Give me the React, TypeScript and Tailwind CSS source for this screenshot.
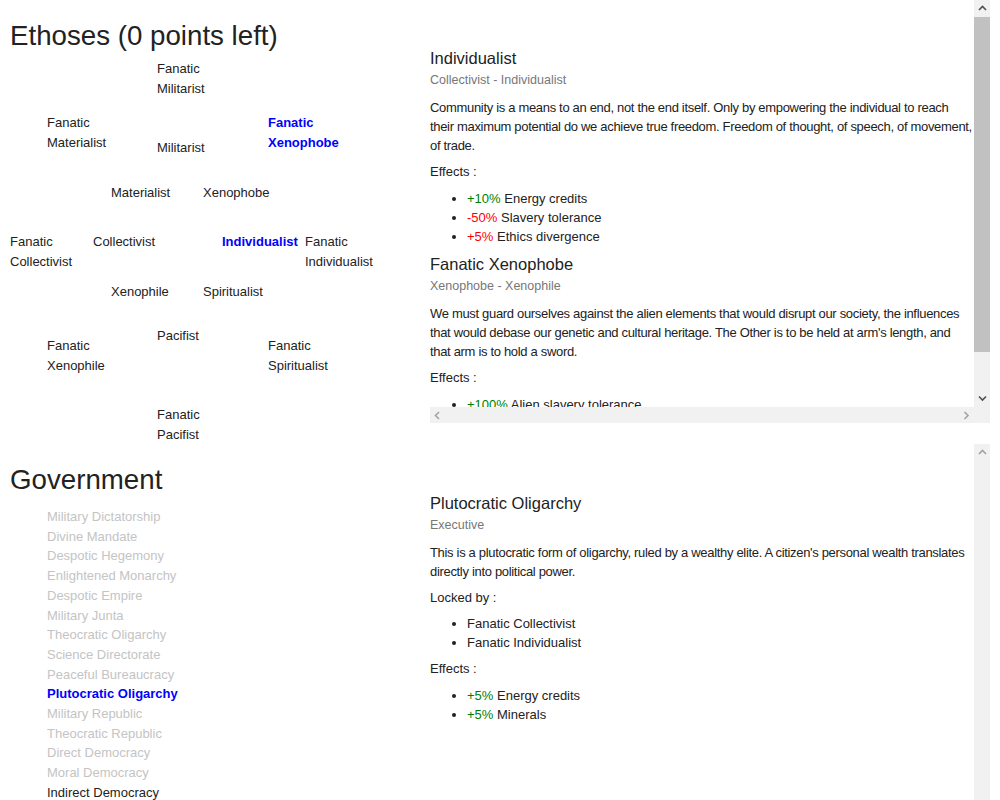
import React from "react";

type Node = { lines: string[]; x: number; y: number; active?: boolean };

const nodes: Node[] = [
  { lines: ["Fanatic", "Militarist"], x: 147, y: 8 },
  { lines: ["Fanatic", "Materialist"], x: 37, y: 62 },
  { lines: ["Militarist"], x: 147, y: 87 },
  { lines: ["Fanatic", "Xenophobe"], x: 258, y: 62, active: true },
  { lines: ["Materialist"], x: 101, y: 132 },
  { lines: ["Xenophobe"], x: 193, y: 132 },
  { lines: ["Fanatic", "Collectivist"], x: 0, y: 181 },
  { lines: ["Collectivist"], x: 83, y: 181 },
  { lines: ["Individualist"], x: 212, y: 181, active: true },
  { lines: ["Fanatic", "Individualist"], x: 295, y: 181 },
  { lines: ["Xenophile"], x: 101, y: 231 },
  { lines: ["Spiritualist"], x: 193, y: 231 },
  { lines: ["Fanatic", "Xenophile"], x: 37, y: 285 },
  { lines: ["Pacifist"], x: 147, y: 275 },
  { lines: ["Fanatic", "Spiritualist"], x: 258, y: 285 },
  { lines: ["Fanatic", "Pacifist"], x: 147, y: 354 },
];

const governments: { name: string; state: "off" | "active" | "on" }[] = [
  { name: "Military Dictatorship", state: "off" },
  { name: "Divine Mandate", state: "off" },
  { name: "Despotic Hegemony", state: "off" },
  { name: "Enlightened Monarchy", state: "off" },
  { name: "Despotic Empire", state: "off" },
  { name: "Military Junta", state: "off" },
  { name: "Theocratic Oligarchy", state: "off" },
  { name: "Science Directorate", state: "off" },
  { name: "Peaceful Bureaucracy", state: "off" },
  { name: "Plutocratic Oligarchy", state: "active" },
  { name: "Military Republic", state: "off" },
  { name: "Theocratic Republic", state: "off" },
  { name: "Direct Democracy", state: "off" },
  { name: "Moral Democracy", state: "off" },
  { name: "Indirect Democracy", state: "on" },
];

function Chevron({ dir, color }: { dir: "up" | "down" | "left" | "right"; color: string }) {
  const pts: Record<string, string> = {
    up: "1,5 4.5,1.5 8,5",
    down: "1,1.5 4.5,5 8,1.5",
    left: "5,1 1.5,4.5 5,8",
    right: "1.5,1 5,4.5 1.5,8",
  };
  const vertical = dir === "up" || dir === "down";
  return (
    <svg width={vertical ? 9 : 7} height={vertical ? 7 : 9} viewBox={vertical ? "0 0 9 7" : "0 0 7 9"}>
      <polyline points={pts[dir]} fill="none" stroke={color} strokeWidth="1.6" />
    </svg>
  );
}

type Effect = { value: string; positive: boolean; label: string };

function Entry({
  title,
  subtitle,
  text,
  locked,
  effects,
  first,
}: {
  title: string;
  subtitle: string;
  text: string;
  locked?: string[];
  effects: Effect[];
  first?: boolean;
}) {
  return (
    <div className={first ? "" : "mt-[8.5px]"}>
      <div className="text-[16.5px] leading-[20px] text-[#222]">{title}</div>
      <div className="mt-[1.5px] text-[12.5px] leading-[20px] text-[#777]">{subtitle}</div>
      <p className="mt-[8px] text-[13px] leading-[19px] tracking-[-0.32px] text-[#222]">{text}</p>
      {locked && (
        <>
          <div className="mt-[7px] text-[13px] leading-[20px] text-[#222]">Locked by :</div>
          <ul className="mt-[6.5px] list-disc pl-[37px] text-[13px] leading-[19px] text-[#222]">
            {locked.map((l) => (
              <li key={l}>{l}</li>
            ))}
          </ul>
        </>
      )}
      <div className="mt-[7px] text-[13px] leading-[20px] text-[#222]">Effects :</div>
      <ul className="mt-[7px] list-disc pl-[37px] text-[13px] leading-[19px] text-[#222]">
        {effects.map((e) => (
          <li key={e.label}>
            <span className={e.positive ? "text-[#008000]" : "text-[#ff0000]"}>{e.value}</span> {e.label}
          </li>
        ))}
      </ul>
    </div>
  );
}

export default function App() {
  return (
    <div
      className="h-[800px] w-[1000px] overflow-hidden bg-white text-[#222]"
      style={{ fontFamily: '"Liberation Sans", Arial, sans-serif' }}
    >
      {/* Ethoses section */}
      <div className="flex">
        <div className="w-[430px] pl-[10px] pt-[20px]">
          <h1 className="text-[27.7px] leading-[31px] font-normal text-[#222]">Ethoses (0 points left)</h1>
          <div className="relative h-[393px]">
            {nodes.map((n, i) => (
              <div
                key={i}
                className={
                  "absolute text-[13px] leading-[20px] " +
                  (n.active ? "font-bold text-[#0000ff]" : "text-[#222]")
                }
                style={{ left: n.x, top: n.y }}
              >
                {n.lines.map((l) => (
                  <div key={l}>{l}</div>
                ))}
              </div>
            ))}
          </div>
        </div>

        <div className="flex h-[423px] w-[560px] flex-col">
          <div className="flex min-h-0 flex-1">
            <div className="min-w-0 flex-1 overflow-hidden pt-[48px]">
              <Entry
                first
                title="Individualist"
                subtitle="Collectivist - Individualist"
                text="Community is a means to an end, not the end itself. Only by empowering the individual to reach their maximum potential do we achieve true freedom. Freedom of thought, of speech, of movement, of trade."
                effects={[
                  { value: "+10%", positive: true, label: "Energy credits" },
                  { value: "-50%", positive: false, label: "Slavery tolerance" },
                  { value: "+5%", positive: false, label: "Ethics divergence" },
                ]}
              />
              <Entry
                title="Fanatic Xenophobe"
                subtitle="Xenophobe - Xenophile"
                text="We must guard ourselves against the alien elements that would disrupt our society, the influences that would debase our genetic and cultural heritage. The Other is to be held at arm's length, and that arm is to hold a sword."
                effects={[{ value: "+100%", positive: true, label: "Alien slavery tolerance" }]}
              />
            </div>
            <div className="flex w-[16px] flex-col bg-[#f1f1f1]">
              <div className="flex h-[17px] items-center justify-center">
                <Chevron dir="up" color="#505050" />
              </div>
              <div className="h-[335px] bg-[#c1c1c1]" />
              <div className="flex-1" />
              <div className="flex h-[17px] items-center justify-center">
                <Chevron dir="down" color="#505050" />
              </div>
            </div>
          </div>
          <div className="flex h-[16px]">
            <div className="flex flex-1 items-center justify-between bg-[#f1f1f1] px-[4px]">
              <Chevron dir="left" color="#a3a3a3" />
              <Chevron dir="right" color="#a3a3a3" />
            </div>
            <div className="w-[16px] bg-[#f1f1f1]" />
          </div>
        </div>
      </div>

      {/* Government section */}
      <div className="flex">
        <div className="w-[430px] pl-[10px] pt-[20px]">
          <h1 className="text-[27.7px] leading-[31px] font-normal text-[#222]">Government</h1>
          <ul className="mt-[12px] pl-[37px] text-[13px] leading-[19.7px]">
            {governments.map((g) => (
              <li
                key={g.name}
                className={
                  g.state === "active"
                    ? "font-bold text-[#0000ff]"
                    : g.state === "on"
                    ? "text-[#222]"
                    : "text-[#c4c4c4]"
                }
              >
                {g.name}
              </li>
            ))}
          </ul>
        </div>

        <div className="flex h-[380px] w-[560px]">
          <div className="min-w-0 flex-1 overflow-hidden pt-[49px]">
            <Entry
              first
              title="Plutocratic Oligarchy"
              subtitle="Executive"
              text="This is a plutocratic form of oligarchy, ruled by a wealthy elite. A citizen's personal wealth translates directly into political power."
              locked={["Fanatic Collectivist", "Fanatic Individualist"]}
              effects={[
                { value: "+5%", positive: true, label: "Energy credits" },
                { value: "+5%", positive: true, label: "Minerals" },
              ]}
            />
          </div>
          <div className="flex w-[16px] flex-col bg-[#f1f1f1]">
            <div className="flex h-[17px] items-center justify-center">
              <Chevron dir="up" color="#a3a3a3" />
            </div>
          </div>
        </div>
      </div>
    </div>
  );
}
